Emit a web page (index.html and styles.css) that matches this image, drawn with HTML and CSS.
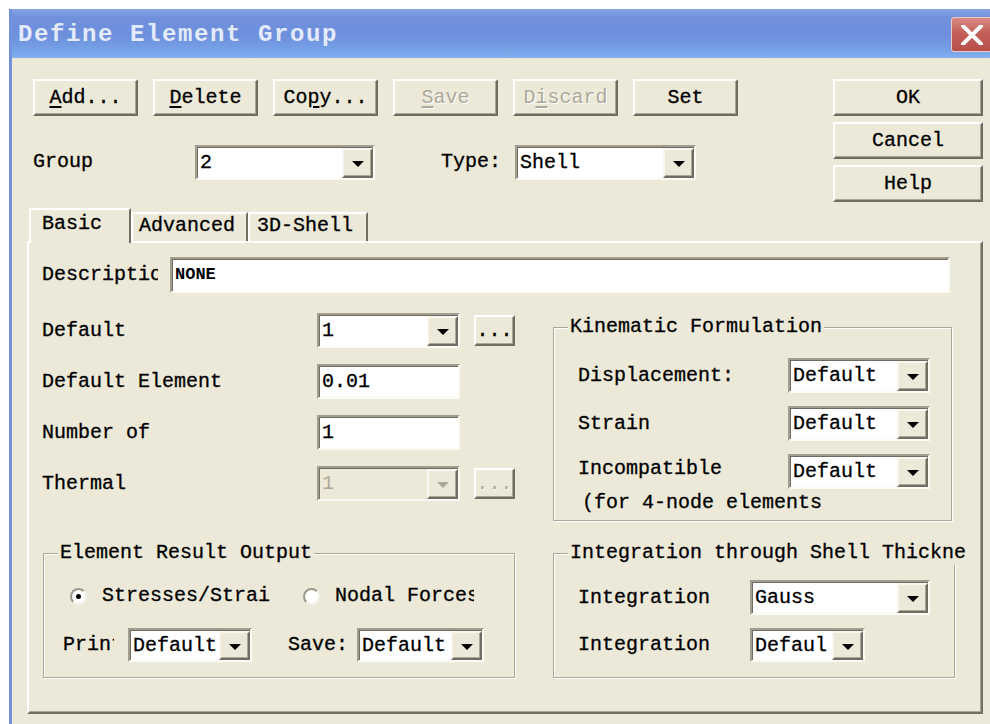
FILE: index.html
```html
<!DOCTYPE html>
<html lang="en">
<head>
<meta charset="utf-8">
<title>Define Element Group</title>
<link rel="stylesheet" href="styles.css">
</head>
<body>
<div class="window">
  <div class="titlebar">
    <span class="title">Define Element Group</span>
    <span class="close">
      <svg width="22" height="20" viewBox="0 0 22 20"><path d="M2 1 L20 19 M20 1 L2 19" stroke="#fff" stroke-width="4" stroke-linecap="square" fill="none"/></svg>
    </span>
  </div>
  <div class="client">
    <div class="top">
      <div class="top-left">
        <div class="toolbar">
          <div class="btn"><u>A</u>dd...</div>
          <div class="btn"><u>D</u>elete</div>
          <div class="btn">Co<u>p</u>y...</div>
          <div class="btn disabled"><u>S</u>ave</div>
          <div class="btn disabled">D<u>i</u>scard</div>
          <div class="btn">Set</div>
        </div>
        <div class="group-row">
          <span class="group-lbl">Group</span>
          <div class="combo w-group"><span class="cv">2</span><span class="dd"></span></div>
          <span class="type-lbl">Type:</span>
          <div class="combo w-type"><span class="cv">Shell</span><span class="dd"></span></div>
        </div>
      </div>
      <div class="top-right">
        <div class="btn wide">OK</div>
        <div class="btn wide">Cancel</div>
        <div class="btn wide">Help</div>
      </div>
    </div>

    <div class="tabs">
      <div class="tab sel tab-basic">Basic</div>
      <div class="tab tab-adv">Advanced</div>
      <div class="tab tab-3d">3D-Shell</div>
    </div>

    <div class="panel">
      <div class="desc-row">
        <span class="desc-lbl">Description</span>
        <div class="input desc-input">NONE</div>
      </div>

      <div class="middle">
        <div class="left-grid">
          <span class="lbl">Default</span>
          <div class="combo"><span class="cv">1</span><span class="dd"></span></div>
          <div class="btn dots">...</div>

          <span class="lbl">Default Element</span>
          <div class="input">0.01</div>
          <span></span>

          <span class="lbl">Number of</span>
          <div class="input">1</div>
          <span></span>

          <span class="lbl">Thermal</span>
          <div class="combo off"><span class="cv">1</span><span class="dd"></span></div>
          <div class="btn dots disabled">...</div>
        </div>

        <fieldset class="box kin">
          <legend>Kinematic Formulation</legend>
          <div class="krow">
            <span>Displacement:</span>
            <div class="combo"><span class="cv">Default</span><span class="dd"></span></div>
          </div>
          <div class="krow">
            <span>Strain</span>
            <div class="combo"><span class="cv">Default</span><span class="dd"></span></div>
          </div>
          <div class="krow">
            <span class="up">Incompatible</span>
            <div class="combo"><span class="cv">Default</span><span class="dd"></span></div>
          </div>
          <div class="note">(for 4-node elements</div>
        </fieldset>
      </div>

      <div class="bottom">
        <fieldset class="box out">
          <legend>Element Result Output</legend>
          <div class="radios">
            <span class="ritem r1"><span class="radio on"></span><span class="rtxt t1">Stresses/Strains</span></span>
            <span class="ritem r2"><span class="radio"></span><span class="rtxt t2">Nodal Forces</span></span>
          </div>
          <div class="prow">
            <span class="prin-lbl">Print:</span>
            <div class="combo w-prin"><span class="cv">Default</span><span class="dd"></span></div>
            <span class="save-lbl">Save:</span>
            <div class="combo w-save"><span class="cv">Default</span><span class="dd"></span></div>
          </div>
        </fieldset>

        <fieldset class="box integ">
          <legend><span class="leg-clip">Integration through Shell Thickness</span></legend>
          <div class="irow">
            <span>Integration</span>
            <div class="combo w-gauss"><span class="cv">Gauss</span><span class="dd"></span></div>
          </div>
          <div class="irow second">
            <span>Integration</span>
            <div class="combo w-defaul"><span class="cv">Defaul</span><span class="dd"></span></div>
          </div>
        </fieldset>
      </div>
    </div>
  </div>
</div>
</body>
</html>
```
FILE: styles.css
```css
* { box-sizing: border-box; }

html, body {
  margin: 0;
  width: 990px;
  height: 724px;
  overflow: hidden;
  background: #fff;
}

body {
  font-family: "Liberation Mono", "DejaVu Sans Mono", monospace;
  font-size: 20px;
  line-height: 24px;
  color: #000;
  -webkit-text-stroke: 0.3px currentColor;
}

u { text-underline-offset: 3px; }

/* window frame */
.window {
  margin: 9px 0 0 9px;
  width: 981px;
  border-left: 3px solid #7193dd;
}

.titlebar {
  height: 49px;
  display: flex;
  align-items: center;
  justify-content: space-between;
  background: linear-gradient(to bottom, #86a3e4 0%, #7090dc 18%, #6e90dc 55%, #76a2e8 85%, #84b1ee 100%);
}

.title {
  padding: 2px 0 0 6px;
  font-size: 24px;
  font-weight: bold;
  letter-spacing: 1.6px;
  color: #e3ebfa;
  -webkit-text-stroke: 0;
}

.close {
  width: 42px;
  height: 35px;
  margin-right: -3px;
  margin-top: 2px;
  display: flex;
  align-items: center;
  justify-content: center;
  background: linear-gradient(to bottom, #d88a84, #c4605a 45%, #b84f4a);
  border: 1px solid #f0c8c4;
  border-radius: 3px;
}

.client {
  background: #ece9d8;
  height: 666px;
}

/* raised push button */
.btn {
  height: 37px;
  display: flex;
  align-items: center;
  justify-content: center;
  background: #ece9d8;
  border: 2px solid;
  border-color: #fff #6f6d62 #6f6d62 #fff;
  box-shadow: inset -1px -1px 0 #aca899;
  white-space: nowrap;
}

.btn.disabled {
  color: #aca899;
  text-shadow: 1px 1px 0 #fff;
  -webkit-text-stroke: 0;
}

/* top area */
.top {
  display: grid;
  grid-template-columns: 821px 150px;
}

.top-left { padding-left: 21px; }

.toolbar {
  display: flex;
  gap: 15px;
  margin-top: 21px;
}

.toolbar .btn { width: 105px; }

.group-row {
  display: flex;
  align-items: center;
  height: 34px;
  margin-top: 29px;
}

.group-lbl { width: 162px; }
.type-lbl { width: 74px; margin-left: 66px; }
.w-group { width: 180px; }
.w-type { width: 181px; }

.top-right {
  display: flex;
  flex-direction: column;
  gap: 6px;
  margin-top: 21px;
}

.btn.wide { width: 150px; }

/* sunken fields */
.combo, .input {
  height: 35px;
  background: #fff;
  border: 2px solid;
  border-color: #a19e90 #fbfaf5 #fbfaf5 #a19e90;
  box-shadow: inset 1px 1px 0 #6f6d62;
}

.combo {
  display: flex;
  padding: 1px 0 0 1px;
}

.cv {
  flex: 1;
  min-width: 0;
  padding-left: 2px;
  align-self: center;
  overflow: hidden;
  white-space: nowrap;
}

.dd {
  width: 31px;
  flex: none;
  display: flex;
  align-items: center;
  justify-content: center;
  background: #ece9d8;
  border: 2px solid;
  border-color: #f7f6f0 #6f6d62 #6f6d62 #f7f6f0;
  box-shadow: inset -1px -1px 0 #aca899;
}

.dd::after {
  content: "";
  border-left: 6px solid transparent;
  border-right: 6px solid transparent;
  border-top: 6px solid #000;
  margin-top: 2px;
}

.combo.off { background: #ece9d8; }
.combo.off .cv { color: #aca899; -webkit-text-stroke: 0; }
.combo.off .dd::after { border-top-color: #aca899; }

.input {
  display: flex;
  align-items: center;
  padding-left: 3px;
  white-space: nowrap;
}

/* tabs */
.tabs {
  display: flex;
  align-items: flex-end;
  height: 35px;
  margin: 6px 0 -2px 0;
  padding-left: 17px;
  position: relative;
  z-index: 1;
}

.tab {
  height: 29px;
  margin-bottom: 2px;
  border-top: 2px solid #fff;
  border-left: 2px solid #fff;
  border-right: 2px solid #716f64;
  background: #ece9d8;
  white-space: nowrap;
}

.tab.sel {
  height: 35px;
  margin-bottom: 0;
  padding-top: 2px;
}

.tab-basic { width: 102px; padding-left: 11px; }
.tab-adv { width: 117px; padding-left: 6px; }
.tab-3d { width: 120px; padding-left: 7px; }

.panel {
  margin-left: 15px;
  width: 956px;
  height: 473px;
  border: 2px solid;
  border-color: #fff #716f64 #716f64 #fff;
  box-shadow: inset -1px -1px 0 #aca899;
  padding-left: 13px;
}

.desc-row {
  display: flex;
  align-items: center;
  margin-top: 14px;
}

.desc-lbl {
  width: 116px;
  margin-right: 12px;
  overflow: hidden;
  white-space: nowrap;
}

.desc-input {
  width: 780px;
  height: 36px;
  font-weight: bold;
  font-size: 17px;
  -webkit-text-stroke: 0;
}

.middle {
  display: flex;
  margin-top: 20px;
}

.left-grid {
  display: grid;
  grid-template-columns: 275px 143px 55px;
  grid-auto-rows: 35px;
  row-gap: 16px;
  align-items: center;
  align-self: flex-start;
}

.left-grid .lbl { white-space: nowrap; }

.btn.dots {
  width: 41px;
  height: 31px;
  justify-self: end;
}

/* group boxes */
.box {
  margin: 0;
  min-width: 0;
  border: 1px solid #aca899;
  box-shadow: 1px 1px 0 #fff, inset 1px 1px 0 #fff;
}

.box legend {
  padding: 0 2px;
  line-height: 24px;
  background: #ece9d8;
  white-space: nowrap;
}

.kin {
  width: 399px;
  margin: 2px 0 0 38px;
  padding: 19px 0 5px 24px;
}

.kin legend, .integ legend { margin-left: -10px; }
.out legend { margin-left: -5px; }

.krow {
  display: grid;
  grid-template-columns: 210px 142px;
  align-items: center;
  height: 35px;
  margin-bottom: 13px;
}

.krow:nth-of-type(3) { margin-bottom: 2px; }

.krow .up { margin-top: -6px; }

.note { padding-left: 4px; }

.bottom {
  display: flex;
  margin: 20px 0 0 1px;
}

.out {
  width: 472px;
  padding: 19px 0 14px 19px;
}

.radios {
  display: flex;
  align-items: center;
  height: 24px;
  margin-left: 7px;
}

.ritem {
  display: flex;
  align-items: center;
  white-space: nowrap;
}

.r1 { width: 233px; }

.rtxt {
  overflow: hidden;
  white-space: nowrap;
}

.t1 { width: 169px; }
.t2 { width: 139px; }

.radio {
  position: relative;
  flex: none;
  width: 17px;
  height: 17px;
  border-radius: 50%;
  background: #fff;
  border: 2px solid;
  border-color: #9c998c #f4f3ec #f4f3ec #9c998c;
  margin-right: 15px;
}

.radio.on::after {
  content: "";
  position: absolute;
  left: 4px;
  top: 4px;
  width: 5px;
  height: 5px;
  border-radius: 50%;
  background: #000;
}

.prow {
  display: flex;
  align-items: center;
  height: 34px;
  margin-top: 20px;
}

.prow .combo { height: 34px; }

.prin-lbl {
  width: 51px;
  margin-right: 14px;
  overflow: hidden;
  white-space: nowrap;
}

.w-prin { width: 124px; }
.save-lbl { width: 69px; margin-left: 36px; }
.w-save { width: 127px; }

.integ {
  width: 402px;
  margin-left: 38px;
  padding: 15px 0 15px 24px;
}

.leg-clip {
  display: block;
  width: 396px;
  overflow: hidden;
}

.irow {
  display: grid;
  grid-template-columns: 172px auto;
  align-items: center;
  height: 35px;
}

.irow.second {
  height: 34px;
  margin-top: 13px;
}

.irow.second .combo { height: 34px; }

.w-gauss { width: 180px; }
.w-defaul { width: 115px; }
```
